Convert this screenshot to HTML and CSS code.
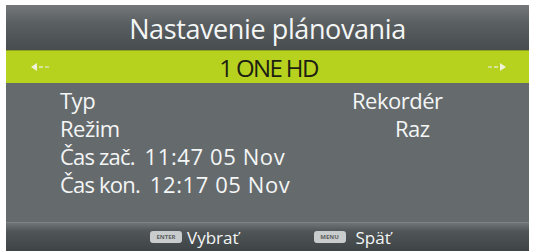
FILE: index.html
```html
<!DOCTYPE html>
<html>
<head>
<meta charset="utf-8">
<link rel="stylesheet" href="styles.css">
</head>
<body>
<div class="screen">
  <div class="title">Nastavenie plánovania</div>
  <div class="channel">
    <span class="arrow left"><svg width="26" height="10" viewBox="0 0 26 10"><path d="M1 5 L7 1 L7 9 Z" fill="#eef2d8"/><rect x="9" y="4" width="4" height="2" fill="#d6e89a"/><rect x="15" y="4" width="4" height="2" fill="#cfe28a"/></svg></span>
    <span class="chname">1 ONE HD</span>
    <span class="arrow right"><svg width="26" height="10" viewBox="0 0 26 10"><rect x="7" y="4" width="4" height="2" fill="#cfe28a"/><rect x="13" y="4" width="4" height="2" fill="#d6e89a"/><path d="M25 5 L19 1 L19 9 Z" fill="#eef2d8"/></svg></span>
  </div>
  <div class="body">
    <div class="row"><span class="label">Typ</span><span class="value">Rekordér</span></div>
    <div class="row"><span class="label">Režim</span><span class="value raz">Raz</span></div>
    <div class="row time"><span class="tlabel">Čas zač.  </span><span class="tval">11:47 05 Nov</span></div>
    <div class="row time"><span class="tlabel">Čas kon.  </span><span class="tval">12:17 05 Nov</span></div>
  </div>
  <div class="footer">
    <span class="hint"><span class="key">ENTER</span>Vybrať</span>
    <span class="hint wide"><span class="key">MENU</span>Späť</span>
  </div>
</div>
</body>
</html>
```
FILE: styles.css
```css
html, body {
  margin: 0;
  padding: 0;
  background: #ffffff;
}
body {
  font-family: "Open Sans", "Noto Sans", sans-serif;
  color: #f4f6f6;
}
.screen {
  margin: 5px 5px 0 6px;
  width: 523px;
  height: 246px;
  background: #656a6d;
  display: flex;
  flex-direction: column;
  overflow: hidden;
}
.title {
  height: 45px;
  background: linear-gradient(#74787a 0%, #5a5f62 40%, #474c4f 100%);
  text-align: center;
  font-size: 27px;
  line-height: 48px;
  letter-spacing: -0.4px;
}
.channel {
  height: 33px;
  background: #b6d21f;
  display: flex;
  align-items: center;
  justify-content: space-between;
  padding: 0 22px 0 24px;
  border-top: 1px solid #8da31c;
  box-sizing: border-box;
}
.chname {
  color: #1d1f12;
  font-size: 24px;
  letter-spacing: -1.6px;
  line-height: 33px;
}
.arrow svg { display: block; }
.body {
  height: 139px;
  padding: 3px 0 0 54px;
  box-sizing: border-box;
  font-size: 22px;
  letter-spacing: -0.5px;
}
.row {
  display: grid;
  grid-template-columns: 292px auto;
  height: 28px;
  line-height: 28px;
}
.raz { padding-left: 43px; }
.row.time {
  display: block;
  white-space: pre;
  height: 28px;
}
.tlabel { letter-spacing: -0.8px; }
.tval { letter-spacing: 0.6px; }
.footer {
  flex: 1;
  background: linear-gradient(#6f7476 0%, #505557 30%, #3e4345 100%);
  border-top: 1px solid #7d8284;
  display: flex;
  align-items: center;
  padding-left: 144px;
  gap: 75px;
  font-size: 17px;
}
.hint {
  display: flex;
  align-items: center;
  gap: 5px;
}
.hint.wide { gap: 10px; }
.key {
  display: inline-block;
  width: 32px;
  height: 12px;
  border-radius: 3px;
  background: #c9cccd;
  color: #5c6062;
  font-size: 6px;
  line-height: 12px;
  text-align: center;
  font-weight: bold;
  letter-spacing: 0;
}
```
